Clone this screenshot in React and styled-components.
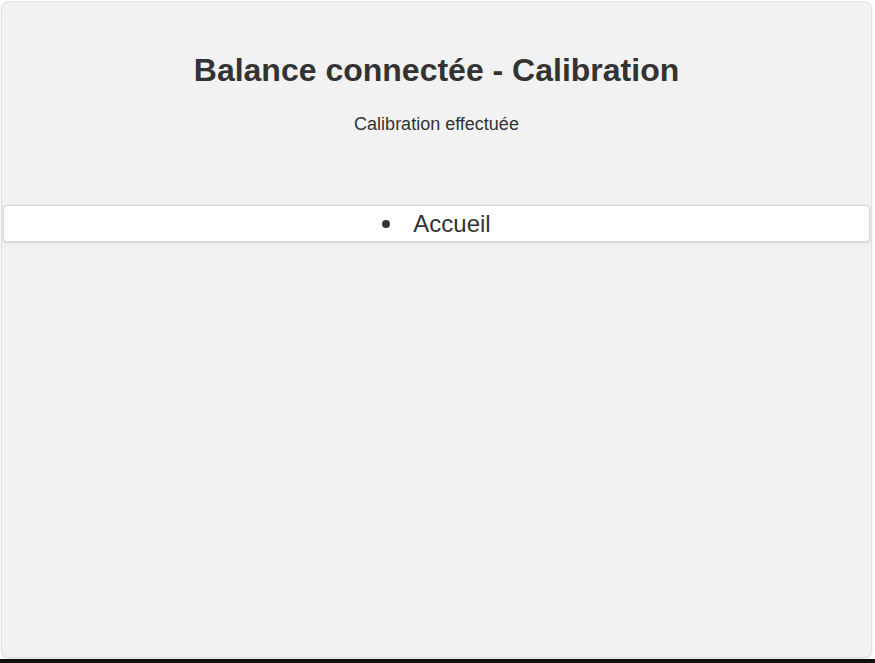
import React from 'react';
import styled, { createGlobalStyle } from 'styled-components';

const GlobalStyle = createGlobalStyle`
  html, body {
    margin: 0;
    padding: 0;
    background: #ffffff;
    font-family: "Liberation Sans", Arial, sans-serif;
  }
`;

const Page = styled.div`
  width: 875px;
  height: 663px;
  display: flex;
  flex-direction: column;
  overflow: hidden;
`;

const Card = styled.main`
  margin: 1px 3px 0 1px;
  height: 657px;
  box-sizing: border-box;
  background: #f2f2f2;
  border: 1px solid #e2e2e2;
  border-radius: 8px;
  box-shadow: 0 1px 2px rgba(0, 0, 0, 0.12);
  padding-top: 50px;
  display: flex;
  flex-direction: column;
  align-items: stretch;
`;

const Title = styled.h1`
  margin: 0;
  text-align: center;
  font-size: 32px;
  font-weight: bold;
  line-height: 37px;
  color: #333333;
`;

const Status = styled.p`
  margin: 24px 0 0;
  text-align: center;
  font-size: 18px;
  line-height: 22px;
  color: #333333;
`;

const Menu = styled.ul`
  margin: 70px 0 0;
  padding: 0;
  list-style: none;
`;

const MenuItem = styled.li`
  margin: 0 1px;
  height: 37px;
  box-sizing: border-box;
  background: #ffffff;
  border: 1px solid #d6d6d6;
  border-radius: 4px;
  box-shadow: 0 1px 3px rgba(0, 0, 0, 0.12);
  display: flex;
  align-items: center;
  justify-content: center;
  gap: 23px;
  font-size: 24px;
  color: #333333;

  &::before {
    content: "";
    width: 8px;
    height: 8px;
    border-radius: 50%;
    background: #333333;
    margin-top: 1px;
  }
`;

const Strip = styled.div`
  flex: 1;
  background: #111111;
  margin-top: 1px;
`;

export default function App() {
  return (
    <>
      <GlobalStyle />
      <Page>
        <Card>
          <Title>Balance connectée - Calibration</Title>
          <Status>Calibration effectuée</Status>
          <Menu>
            <MenuItem>Accueil</MenuItem>
          </Menu>
        </Card>
        <Strip />
      </Page>
    </>
  );
}
